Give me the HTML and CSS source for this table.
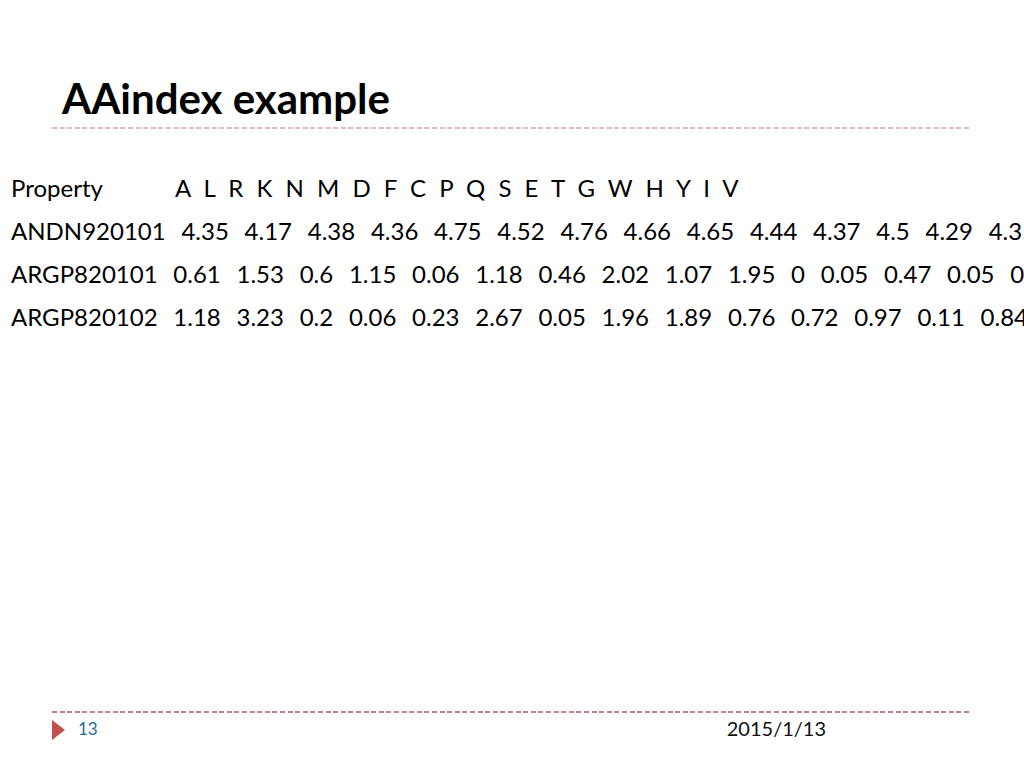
FILE: index.html
```html
<!DOCTYPE html>
<html>
<head>
<meta charset="utf-8">
<link rel="stylesheet" href="styles.css">
</head>
<body>
<div class="slide">
  <header class="head">
    <h1 class="title">AAindex example</h1>
    <div class="rule rule-top"></div>
  </header>
  <main class="body">
    <div class="row head-row"><span class="label">Property</span><span class="cells">A L R K N M D F C P Q S E T G W H Y I V</span></div>
    <div class="row"><span class="cells">ANDN920101 4.35 4.17 4.38 4.36 4.75 4.52 4.76 4.66 4.65 4.44 4.37 4.5 4.29 4.35 4.7 4.6 3.97 3.95 4.63 3.95</span></div>
    <div class="row"><span class="cells">ARGP820101 0.61 1.53 0.6 1.15 0.06 1.18 0.46 2.02 1.07 1.95 0 0.05 0.47 0.05 0.07 2.65 0.61 1.88 2.22 1.32</span></div>
    <div class="row"><span class="cells">ARGP820102 1.18 3.23 0.2 0.06 0.23 2.67 0.05 1.96 1.89 0.76 0.72 0.97 0.11 0.84 0.49 0.77 0.31 0.39 1.31 1.0</span></div>
  </main>
  <footer class="foot">
    <div class="rule rule-bottom"></div>
    <div class="foot-row">
      <span class="arrow"></span>
      <span class="page">13</span>
      <span class="date">2015/1/13</span>
    </div>
  </footer>
</div>
</body>
</html>
```
FILE: styles.css
```css
html, body {
  margin: 0;
  padding: 0;
  background: #ffffff;
}
body {
  font-family: Lato, "Open Sans", "Liberation Sans", sans-serif;
  color: #000;
  overflow: hidden;
}
.slide {
  width: 1024px;
  height: 768px;
  position: relative;
  overflow: hidden;
  display: flex;
  flex-direction: column;
}
.head {
  padding: 70px 52px 0 52px;
}
.title {
  margin: 0 0 0 10px;
  font-size: 42px;
  font-weight: 700;
  line-height: 57px;
  letter-spacing: 0;
}
.rule {
  height: 2px;
  background: repeating-linear-gradient(90deg, var(--dash) 0 5px, transparent 5px 7.6px);
}
.rule-top {
  --dash: #e2b8c4;
}
.body {
  padding: 37px 0 0 11px;
  flex: 1;
}
.row {
  white-space: nowrap;
  font-size: 24px;
  line-height: 43px;
  height: 43px;
  word-spacing: 9.6px;
}
.head-row {
  word-spacing: 7px;
}
.label {
  display: inline-block;
  width: 164px;
}
.foot {
  padding: 0 52px;
  height: 57px;
}
.rule-bottom {
  --dash: #c57f88;
}
.foot-row {
  display: flex;
  align-items: center;
  height: 34px;
}
.arrow {
  width: 0;
  height: 0;
  border-top: 10px solid transparent;
  border-bottom: 10px solid transparent;
  border-left: 13px solid #c0504d;
}
.page {
  margin-left: 13px;
  margin-top: -3px;
  font-size: 17px;
  color: #1f6b8f;
}
.date {
  margin-left: 629px;
  margin-top: -5px;
  font-size: 20px;
  color: #111;
}
```
